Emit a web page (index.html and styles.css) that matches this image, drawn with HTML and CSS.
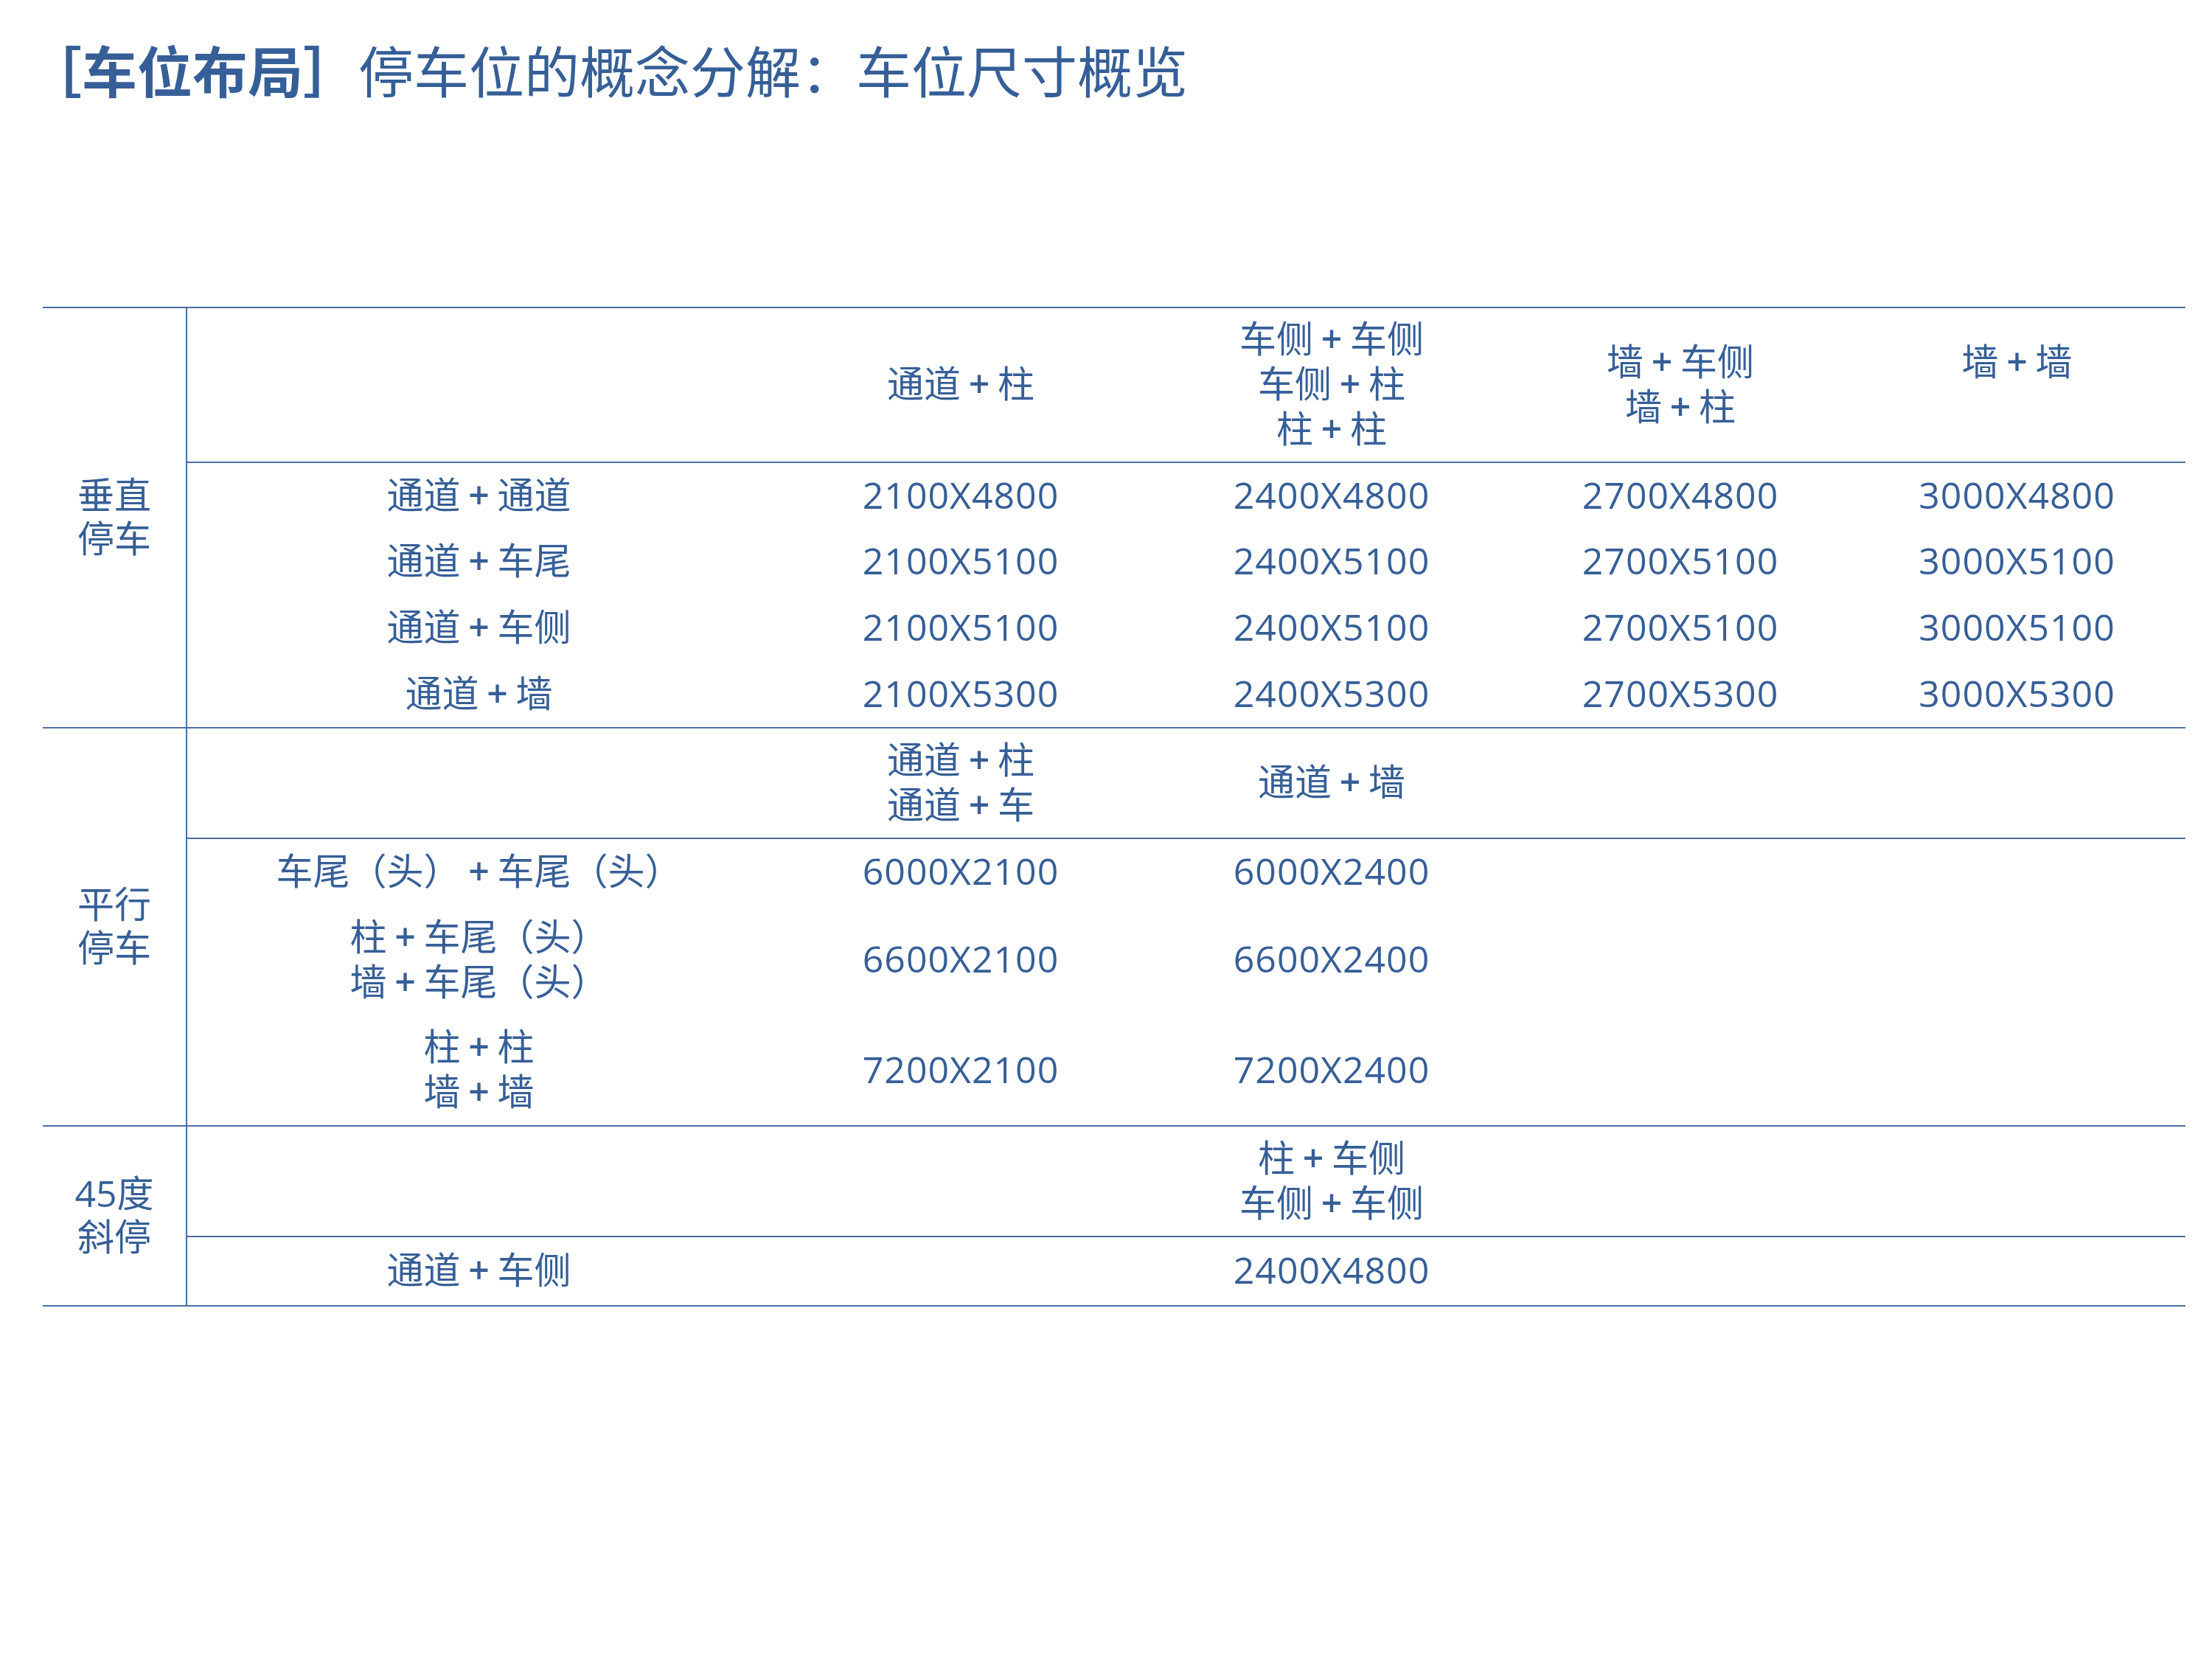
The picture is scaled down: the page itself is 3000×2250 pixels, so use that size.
FILE: index.html
```html
<!DOCTYPE html>
<html lang="zh-CN">
<head>
<meta charset="utf-8">
<title>车位布局</title>
<link rel="stylesheet" href="styles.css">
</head>
<body>
<div class="page">
  <h1 class="title"><span class="title-tag">［车位布局］</span>停车位的概念分解：车位尺寸概览</h1>
  <table class="grid">
    <colgroup>
      <col class="c0"><col class="c1"><col class="c2"><col class="c3"><col class="c4"><col class="c5">
    </colgroup>
    <tbody class="group">
      <tr class="h210">
        <td class="cat" rowspan="5">垂直<br>停车</td>
        <td class="head"></td>
        <td class="head">通道<span class="plus">+</span>柱</td>
        <td class="head">车侧<span class="plus">+</span>车侧<br>车侧<span class="plus">+</span>柱<br>柱<span class="plus">+</span>柱</td>
        <td class="head">墙<span class="plus">+</span>车侧<br>墙<span class="plus">+</span>柱</td>
        <td class="head">墙<span class="plus">+</span>墙<br>&nbsp;</td>
      </tr>
      <tr class="h90"><td>通道<span class="plus">+</span>通道</td><td class="num">2100X4800</td><td class="num">2400X4800</td><td class="num">2700X4800</td><td class="num">3000X4800</td></tr>
      <tr class="h90"><td>通道<span class="plus">+</span>车尾</td><td class="num">2100X5100</td><td class="num">2400X5100</td><td class="num">2700X5100</td><td class="num">3000X5100</td></tr>
      <tr class="h90"><td>通道<span class="plus">+</span>车侧</td><td class="num">2100X5100</td><td class="num">2400X5100</td><td class="num">2700X5100</td><td class="num">3000X5100</td></tr>
      <tr class="h90"><td>通道<span class="plus">+</span>墙</td><td class="num">2100X5300</td><td class="num">2400X5300</td><td class="num">2700X5300</td><td class="num">3000X5300</td></tr>
    </tbody>
    <tbody class="group">
      <tr class="h150">
        <td class="cat" rowspan="4">平行<br>停车</td>
        <td class="head"></td>
        <td class="head">通道<span class="plus">+</span>柱<br>通道<span class="plus">+</span>车</td>
        <td class="head">通道<span class="plus">+</span>墙</td>
        <td class="head"></td>
        <td class="head"></td>
      </tr>
      <tr class="h90"><td>车尾（头）<span class="plus">+</span>车尾（头）</td><td class="num">6000X2100</td><td class="num">6000X2400</td><td></td><td></td></tr>
      <tr class="h150"><td>柱<span class="plus">+</span>车尾（头）<br>墙<span class="plus">+</span>车尾（头）</td><td class="num">6600X2100</td><td class="num">6600X2400</td><td></td><td></td></tr>
      <tr class="h150"><td>柱<span class="plus">+</span>柱<br>墙<span class="plus">+</span>墙</td><td class="num">7200X2100</td><td class="num">7200X2400</td><td></td><td></td></tr>
    </tbody>
    <tbody class="group">
      <tr class="h150">
        <td class="cat" rowspan="2">45度<br>斜停</td>
        <td class="head"></td>
        <td class="head"></td>
        <td class="head">柱<span class="plus">+</span>车侧<br>车侧<span class="plus">+</span>车侧</td>
        <td class="head"></td>
        <td class="head"></td>
      </tr>
      <tr class="h94"><td>通道<span class="plus">+</span>车侧</td><td></td><td class="num">2400X4800</td><td></td><td></td></tr>
    </tbody>
  </table>
</div>
</body>
</html>
```
FILE: styles.css
```css
html, body {
  margin: 0;
  padding: 0;
  background: #ffffff;
}

.page {
  width: 3000px;
  height: 2250px;
  padding: 0 36px 0 58px;
  box-sizing: border-box;
  color: #365f97;
  font-family: "Open Sans", "Noto Sans CJK SC", sans-serif;
}

.title {
  margin: 44px 0 0 -22px;
  height: 100px;
  line-height: 100px;
  font-size: 75px;
  font-weight: 400;
  font-family: "Noto Sans CJK SC", sans-serif;
  white-space: nowrap;
}

.title-tag {
  font-weight: 700;
}

.grid {
  margin-top: 272px;
  width: 2906px;
  border-collapse: collapse;
  table-layout: fixed;
  border-bottom: 2px solid #4a6ea2;
  font-size: 50px;
}

.c0 { width: 195px; }
.c1 { width: 792px; }
.c2 { width: 516px; }
.c3 { width: 490px; }
.c4 { width: 456px; }
.c5 { width: 457px; }

.group {
  border-top: 2px solid #4a6ea2;
}

.grid td {
  padding: 0 0 3px;
  text-align: center;
  vertical-align: middle;
  line-height: 61px;
  white-space: nowrap;
}

.grid td.cat {
  border-right: 2px solid #4a6ea2;
  line-height: 59px;
}

.grid td.head {
  border-bottom: 2px solid #4a6ea2;
}

.grid td.num {
  letter-spacing: 1px;
}

.plus {
  display: inline-block;
  width: 50px;
  text-align: center;
  font-family: "Open Sans", sans-serif;
  font-weight: 600;
}

.h210 { height: 210px; }
.h150 { height: 150px; }
.h94 { height: 94px; }
.h90 { height: 90px; }
```
